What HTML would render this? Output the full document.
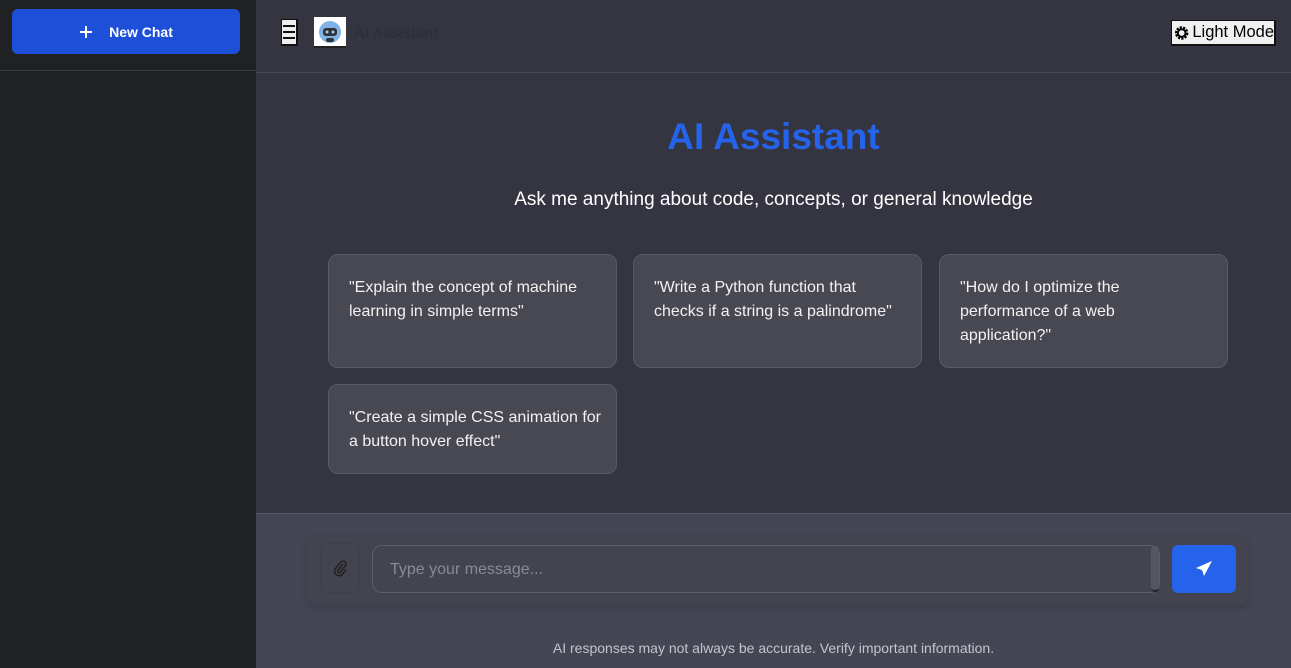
<!DOCTYPE html>
<html><head><meta charset="utf-8"><style>
*{box-sizing:border-box;margin:0;padding:0}
body{width:1291px;height:668px;overflow:hidden;font-family:"Liberation Sans",sans-serif;background:#353541;position:relative}
.side{position:absolute;left:0;top:0;width:256px;height:668px;background:#202123}
.side .line{position:absolute;left:0;top:70px;width:256px;height:1px;background:#3a3b3e}
.nc{position:absolute;left:12px;top:9px;width:228px;height:45px;background:#1d4fd8;border-radius:6px;color:#fff;font-weight:bold;font-size:14px;display:flex;align-items:center;justify-content:center;gap:16px}
.hdr{position:absolute;left:256px;top:0;right:0;height:73px;background:#353541;border-bottom:1px solid #4a4b55}
.ham{position:absolute;left:25px;top:19px;width:17px;height:27px;background:#eee;border:1px solid #111;border-right:2px solid #111;border-bottom:2px solid #111}
.ham i{position:absolute;left:1px;right:1px;height:2px;background:#111}
.av{position:absolute;left:58px;top:17px;width:32px;height:31px;background:#fff;border-bottom:2px solid #222}
.ht{position:absolute;left:98px;top:25px;font-size:16px;color:#2d2d35}
.lm{position:absolute;right:15px;top:20px;width:105px;height:26px;background:#f0f0f0;border:1px solid #111;border-right:2px solid #111;border-bottom:2px solid #111;font-size:16.5px;color:#000;display:flex;align-items:center;padding-left:2px;gap:3px;white-space:nowrap;overflow:hidden}
h1{position:absolute;left:256px;right:0;top:116px;text-align:center;color:#2563eb;font-size:37px;font-weight:bold}
.sub{position:absolute;left:256px;right:0;top:189px;text-align:center;color:#fff;font-size:19px}
.card{position:absolute;width:289px;background:#484852;border:1px solid #5a5a64;border-radius:10px;color:#f2f2f2;font-size:16px;line-height:24px;padding:21px 20px}
.bot{position:absolute;left:256px;top:513px;right:0;bottom:0;background:#444654;border-top:1px solid #55565f}
.box{position:absolute;left:51px;top:21px;width:942px;height:70px;border-radius:10px;background:#43444f;box-shadow:0 3px 8px rgba(0,0,0,.15)}
.clip{position:absolute;left:13px;top:8px;width:40px;height:50px;border:1px solid #3e3f48;border-radius:7px;display:flex;align-items:center;justify-content:center}
.inp{position:absolute;left:65px;top:10px;width:788px;height:48px;border:1px solid #5d5e68;border-radius:10px;color:#8a8b92;font-size:16px;padding:15px 17px}
.sb{position:absolute;left:844px;top:11px;width:8px;height:46px;background:#55565f;border-radius:4px;border-bottom:2px solid #222}
.send{position:absolute;left:865px;top:10px;width:64px;height:48px;background:#2563eb;border-radius:6px;display:flex;align-items:center;justify-content:center}
.disc{position:absolute;left:0;right:0;top:126px;text-align:center;color:#c4c5ca;font-size:14px}
</style></head><body>
<div class="side"><div class="nc"><svg width="14" height="14" viewBox="0 0 14 14"><path d="M7 1v12M1 7h12" stroke="#fff" stroke-width="2"/></svg>New Chat</div><div class="line"></div></div>
<div class="hdr">
<div class="ham"><i style="top:5px"></i><i style="top:11px"></i><i style="top:17px"></i></div>
<div class="av"><svg width="32" height="31" viewBox="0 0 32 31"><circle cx="16" cy="15" r="11" fill="#7fb3e6"/><rect x="9" y="11" width="14" height="8" rx="3" fill="#333"/><circle cx="13" cy="15" r="1.5" fill="#9cf"/><circle cx="19" cy="15" r="1.5" fill="#9cf"/><rect x="12" y="21" width="8" height="4" rx="2" fill="#333"/></svg></div>
<div class="ht">AI Assistant</div>
<div class="lm"><svg width="16" height="16" viewBox="0 0 16 16"><circle cx="8" cy="8" r="5.5" fill="none" stroke="#000" stroke-width="3" stroke-dasharray="2.2 1.2"/><circle cx="8" cy="8" r="4" fill="none" stroke="#000" stroke-width="2"/></svg>Light Mode</div>
</div>
<h1>AI Assistant</h1>
<div class="sub">Ask me anything about code, concepts, or general knowledge</div>
<div class="card" style="left:328px;top:254px;height:114px">"Explain the concept of machine learning in simple terms"</div>
<div class="card" style="left:633px;top:254px;height:114px">"Write a Python function that checks if a string is a palindrome"</div>
<div class="card" style="left:939px;top:254px;height:114px">"How do I optimize the performance of a web application?"</div>
<div class="card" style="left:328px;top:384px;height:90px;padding-right:8px">"Create a simple CSS animation for a button hover effect"</div>
<div class="bot">
<div class="box">
<div class="clip"><svg width="14" height="18" viewBox="0 0 14 18"><path d="M10 5l-5 6.5a1.5 1.5 0 0 0 2.4 1.8l5-6.5a3 3 0 0 0-4.8-3.6L2.4 9.6a4.5 4.5 0 0 0 7.2 5.4L13 10.5" fill="none" stroke="#222" stroke-width="1.6"/></svg></div>
<div class="inp">Type your message...</div>
<div class="sb"></div>
<div class="send"><svg width="18" height="18" viewBox="0 0 18 18"><path d="M17 1L1 8l6 2 2 6z" fill="#fff"/></svg></div>
</div>
<div class="disc">AI responses may not always be accurate. Verify important information.</div>
</div>
</body></html>
